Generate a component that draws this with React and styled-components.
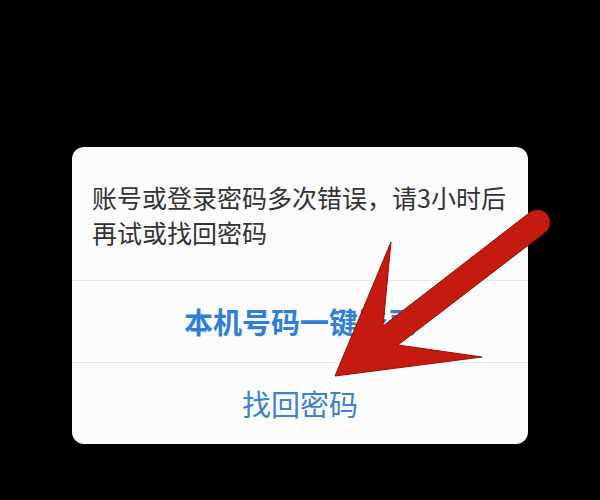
import React from "react";
import styled, { createGlobalStyle } from "styled-components";

const Global = createGlobalStyle`
  html, body { margin: 0; padding: 0; background: #000; }
  body { width: 600px; height: 500px; overflow: hidden; font-family: "Noto Sans CJK SC", "Noto Sans", sans-serif; }
`;

const Screen = styled.div`
  position: relative;
  width: 600px;
  height: 500px;
  background: #000;
  padding-top: 147px;
  box-sizing: border-box;
  display: flex;
  justify-content: center;
  align-items: flex-start;
`;

const Dialog = styled.div`
  width: 456px;
  height: 297px;
  background: #fbfbfb;
  border-radius: 12px;
  display: flex;
  flex-direction: column;
  overflow: hidden;
`;

const Message = styled.div`
  height: 133px;
  box-sizing: border-box;
  padding: 33px 16px 0 20px;
  font-size: 25px;
  line-height: 35px;
  color: #333;
  text-align: left;
`;

const Action = styled.div`
  height: 82px;
  box-sizing: border-box;
  border-top: 1px solid #e6e6e6;
  display: flex;
  align-items: center;
  justify-content: center;
  font-size: 29px;
  color: ${(p) => (p.$primary ? "#2e7fd8" : "#3b82cf")};
  font-weight: ${(p) => (p.$primary ? 700 : 400)};
  padding-bottom: 2px;
`;

const Overlay = styled.svg`
  position: absolute;
  left: 0;
  top: 0;
  width: 600px;
  height: 500px;
  pointer-events: none;
`;

export default function App() {
  return (
    <Screen>
      <Global />
      <Dialog>
        <Message>账号或登录密码多次错误，请3小时后再试或找回密码</Message>
        <Action $primary>本机号码一键登录</Action>
        <Action>找回密码</Action>
      </Dialog>
      <Overlay viewBox="0 0 600 500">
        <path
          d="M335,376 L391,242 L383,326 L530.4,212.1 A12.5,12.5 0 0 1 545.6,231.9 L398,345 L482,357 Z"
          fill="#c41a0f"
          stroke="#8e120a"
          strokeWidth="1"
          strokeLinejoin="miter"
        />
      </Overlay>
    </Screen>
  );
}
